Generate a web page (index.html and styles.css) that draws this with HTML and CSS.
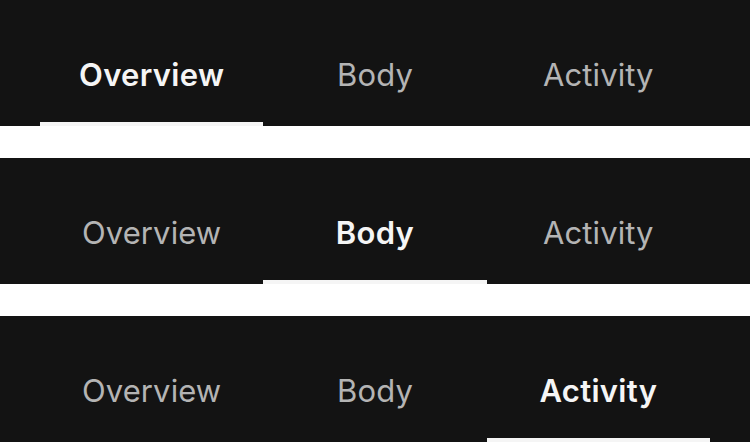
FILE: index.html
```html
<!DOCTYPE html>
<html>
<head>
<meta charset="utf-8">
<link rel="stylesheet" href="styles.css">
</head>
<body>
<div class="stack">
  <nav class="tabbar">
    <div class="tab active">Overview</div>
    <div class="tab">Body</div>
    <div class="tab">Activity</div>
  </nav>
  <nav class="tabbar">
    <div class="tab">Overview</div>
    <div class="tab active">Body</div>
    <div class="tab">Activity</div>
  </nav>
  <nav class="tabbar">
    <div class="tab">Overview</div>
    <div class="tab">Body</div>
    <div class="tab active">Activity</div>
  </nav>
</div>
</body>
</html>
```
FILE: styles.css
```css
html, body {
  margin: 0;
  padding: 0;
  background: #ffffff;
}
.stack {
  display: flex;
  flex-direction: column;
  gap: 32px;
}
.tabbar {
  display: flex;
  height: 126px;
  padding: 0 40px;
  background: #131313;
  box-sizing: border-box;
}
.tab {
  flex: 1;
  display: flex;
  align-items: center;
  justify-content: center;
  padding-top: 26px;
  box-sizing: border-box;
  font-family: Inter, "Noto Sans", sans-serif;
  font-size: 31px;
  font-weight: 400;
  letter-spacing: 0.1px;
  color: #b4b4b4;
  border-bottom: 4px solid transparent;
}
.tab.active {
  font-weight: 600;
  letter-spacing: 0.3px;
  color: #f5f5f5;
  border-bottom-color: #f5f5f5;
}
```
